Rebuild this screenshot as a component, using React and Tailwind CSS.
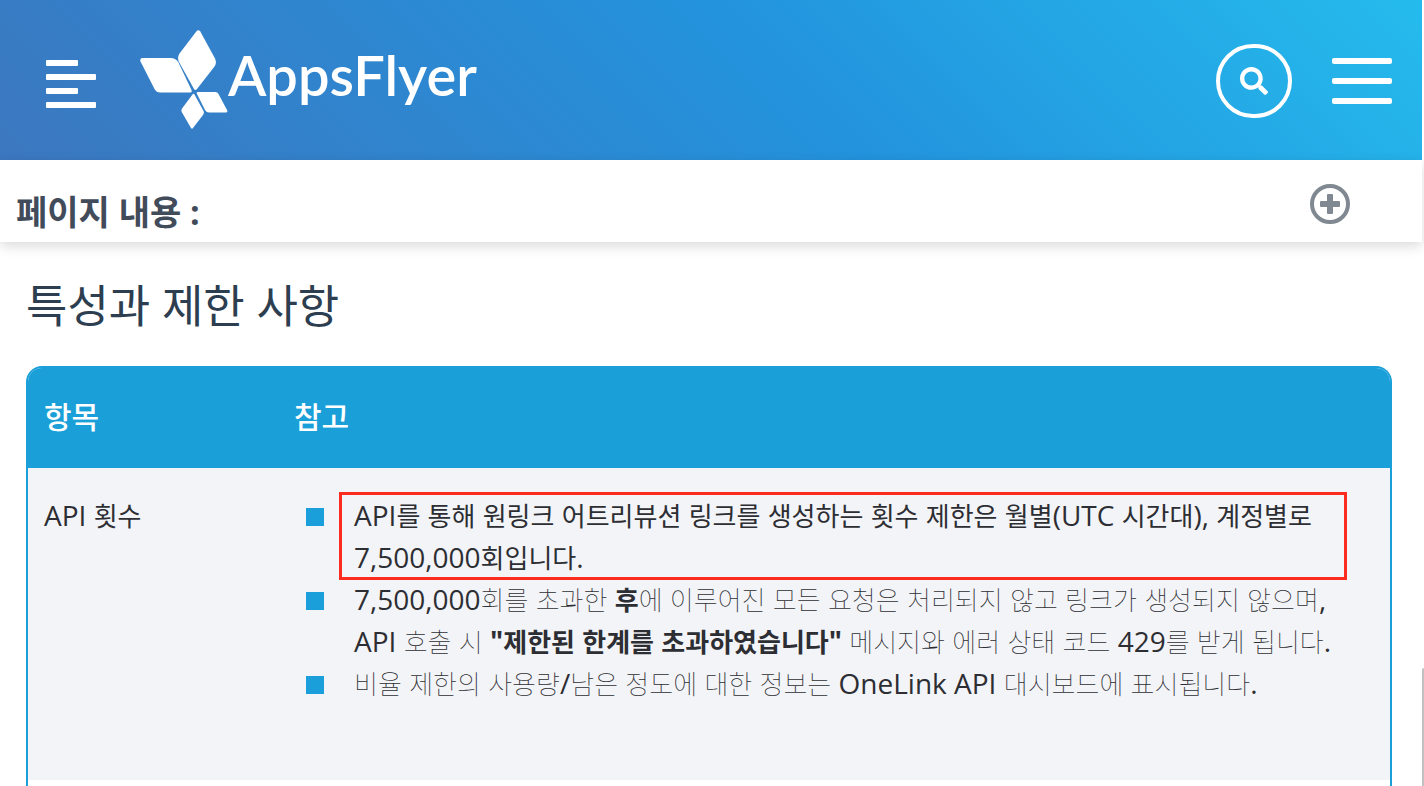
import { Fragment } from "react";
import { FaSearch } from "react-icons/fa";

function Logo() {
  return (
    <a href="#" className="mb-0.5 flex h-[100px] items-center text-white">
      <svg width="88" height="100" viewBox="0 0 88 100" fill="currentColor" aria-hidden="true">
        <path d="M56.3 2.5Q58.3 0 60.3 2.5L75 29.5Q77 34 74.5 37.5L57 60Q55.3 62 54 60L39 33Q37 28.500 39.500 24.500Z" />
        <path d="M2.500 29H30.500Q36 29 38.500 33.500L51.500 61Q52.500 63.500 50 63.500H20Q16.500 63.500 14.500 60L0.500 32.500Q-0.500 29 2.500 29Z" />
        <path d="M58 63H75.500Q77.500 63 78.500 65L87 81Q88 83.500 86 83.500H69Q66.500 83.500 65 81L57 65Q56 63 58 63Z" />
        <path d="M52.500 65.500Q53.500 64 54.500 65.500L63.500 82Q64.500 84 63 86L53 99Q52 100.500 51 99L41.700 83Q41 81 42 79.500Z" />
      </svg>
      <span className="pb-2 font-['Lato'] text-[56px] leading-[60px] font-semibold">AppsFlyer</span>
    </a>
  );
}

function Header() {
  return (
    <header className="flex h-40 items-center bg-[linear-gradient(45deg,#3c77bf_0%,#2393dd_55%,#25bbed_100%)] pr-[30px] pl-[46px]">
      <button type="button" aria-label="Sections" className="mt-2 mr-11 flex w-[50px] flex-col gap-2">
        <span className="h-1.5 w-8 rounded-[1px] bg-white" />
        <span className="h-1.5 w-full rounded-[1px] bg-white" />
        <span className="h-1.5 w-8 rounded-[1px] bg-white" />
        <span className="h-1.5 w-full rounded-[1px] bg-white" />
      </button>
      <Logo />
      <div className="mt-0.5 ml-auto flex items-center gap-10">
        <button
          type="button"
          aria-label="Search"
          className="flex h-[74px] w-[76px] items-center justify-center rounded-full border-4 border-white text-white"
        >
          <FaSearch size={28} />
        </button>
        <button type="button" aria-label="Menu" className="flex w-[60px] flex-col gap-3.5">
          <span className="h-1.5 rounded-[2px] bg-white" />
          <span className="h-1.5 rounded-[2px] bg-white" />
          <span className="h-1.5 rounded-[2px] bg-white" />
        </button>
      </div>
    </header>
  );
}

function PageContents() {
  return (
    <section className="flex h-[82px] items-center justify-between pr-[72px] pl-4 shadow-[0_4px_12px_rgba(0,0,0,0.15)]">
      <h2 className="pt-[22px] text-[34px] leading-[42px] font-bold text-[#414b5a]">페이지 내용 :</h2>
      <button
        type="button"
        aria-label="Expand"
        className="mt-1.5 flex size-10 items-center justify-center rounded-full border-4 border-[#808991] text-[#808991]"
      >
        <svg width="20" height="20" viewBox="0 0 20 20" fill="currentColor" aria-hidden="true">
          <rect x="7" y="0" width="6" height="20" rx="1" />
          <rect x="0" y="7" width="20" height="6" rx="1" />
        </svg>
      </button>
    </section>
  );
}

// Hangul words run a little smaller than the Latin text and spaces around them
function Ko({ children, thin }) {
  return children.split(" ").map((word, i) => (
    <Fragment key={i}>
      {i > 0 && " "}
      <span className={thin ? "text-[26px] leading-none font-thin" : "text-[26px] leading-none"}>{word}</span>
    </Fragment>
  ));
}

function Bullet({ children }) {
  return (
    <li className="flex">
      <span className="mt-3.5 mr-[30px] ml-3 size-[18px] shrink-0 bg-[#1b9fdb]" />
      <div className="relative flex-1">{children}</div>
    </li>
  );
}

function LimitsTable() {
  return (
    <div className="overflow-hidden rounded-t-[16px] border-2 border-b-0 border-[#1b9fd8]">
      <table className="w-full table-fixed text-left">
        <thead>
          <tr className="h-[100px] bg-[#1b9fd8] text-[30px] text-white">
            <th className="w-[250px] px-4 pb-1 font-medium">항목</th>
            <th className="px-4 pb-1 font-medium">참고</th>
          </tr>
        </thead>
        <tbody className="text-[28px] leading-[42px] text-[#2d2e33]">
          <tr className="h-[312px] bg-[#f3f4f7] align-top">
            <td className="px-4 pt-[26px]">
              API <Ko>횟수</Ko>
            </td>
            <td className="pt-[26px] pr-8 pl-4">
              <ul>
                <Bullet>
                  API<Ko>를 통해 원링크 어트리뷰션 링크를 생성하는 횟수 제한은 월별</Ko>(UTC{" "}
                  <Ko>시간대</Ko>), <Ko>계정별로</Ko>
                  <br />
                  7,500,000<Ko>회입니다</Ko>.
                  <span className="absolute -inset-y-0.5 right-[11px] -left-[15px] border-3 border-[#fb2b20]" />
                </Bullet>
                <Bullet>
                  <span className="font-medium">7,500,000</span>
                  <Ko thin>회를 초과한</Ko>{" "}
                  <b>
                    <Ko>후</Ko>
                  </b>
                  <Ko thin>에 이루어진 모든 요청은 처리되지 않고 링크가 생성되지 않으며</Ko>,
                  <br />
                  API <Ko thin>호출 시</Ko>{" "}
                  <b>
                    "<Ko>제한된 한계를 초과하였습니다</Ko>"
                  </b>{" "}
                  <Ko thin>메시지와 에러 상태 코드</Ko> <span className="font-medium">429</span>
                  <Ko thin>를 받게 됩니다</Ko>.
                </Bullet>
                <Bullet>
                  <Ko thin>비율 제한의 사용량</Ko>/<Ko thin>남은 정도에 대한 정보는</Ko> OneLink API{" "}
                  <Ko thin>대시보드에 표시됩니다</Ko>.
                </Bullet>
              </ul>
            </td>
          </tr>
          <tr className="h-20 bg-white">
            <td />
            <td />
          </tr>
        </tbody>
      </table>
    </div>
  );
}

export default function App() {
  return (
    <div className="flex h-screen overflow-hidden bg-white font-['Open_Sans','Noto_Sans_CJK_KR',sans-serif]">
      <div className="min-w-0 flex-1">
        <Header />
        <PageContents />
        <main className="pr-[30px] pl-[26px]">
          <h1 className="pt-[34px] pb-[30px] text-[45px] leading-[60px] text-[#2c3e50]">특성과 제한 사항</h1>
          <LimitsTable />
        </main>
      </div>
      {/* scrollbar thumb */}
      <div className="flex w-0.5 flex-col justify-end">
        <div className="h-[15%] rounded-tl-[2px] bg-[#c1c1c1]" />
      </div>
    </div>
  );
}
